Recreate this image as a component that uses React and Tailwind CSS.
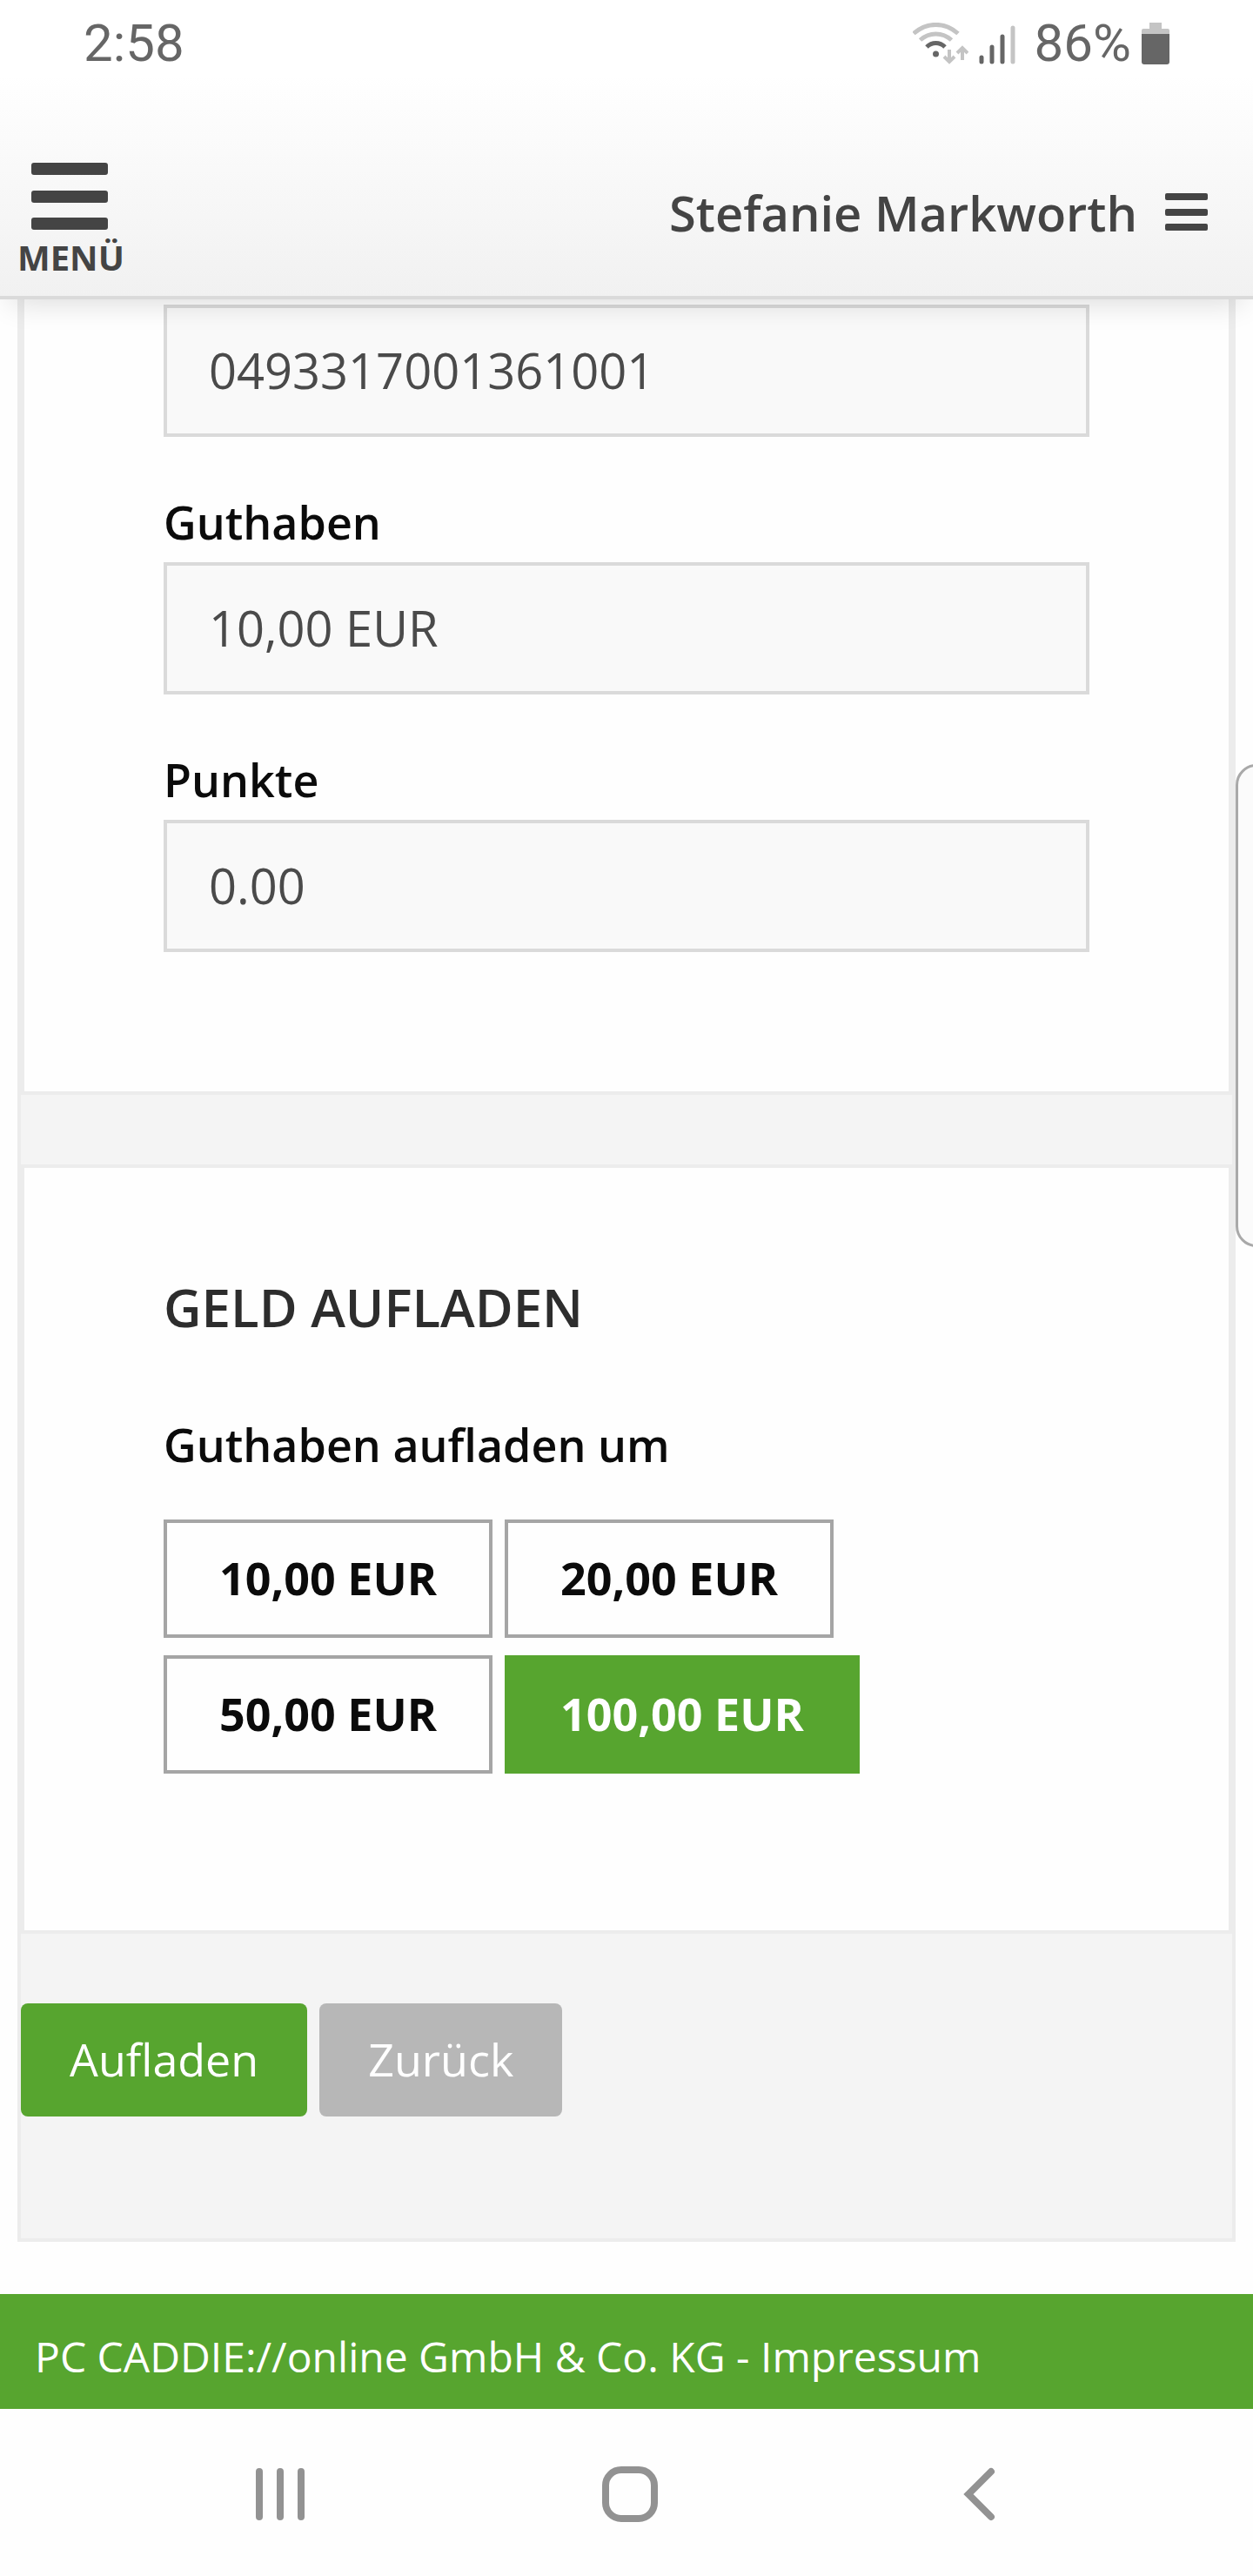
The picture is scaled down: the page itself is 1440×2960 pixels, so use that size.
import { useState } from "react";

const fields = [
  { id: "karte", label: "", value: "0493317001361001" },
  { id: "guthaben", label: "Guthaben", value: "10,00 EUR" },
  { id: "punkte", label: "Punkte", value: "0.00" },
];

const amounts = ["10,00 EUR", "20,00 EUR", "50,00 EUR", "100,00 EUR"];

function StatusBar() {
  return (
    <div className="flex items-center justify-between pt-4 pl-24 pr-24 font-[Roboto,sans-serif] text-[60px] leading-[68px] text-[#666]">
      <span>2:58</span>
      <div className="flex items-center">
        <svg width="64" height="48" viewBox="0 0 64 48" fill="none" aria-hidden="true">
          <path d="M1 12.500C16-1 37-1 52 12.500" stroke="#c4c4c4" strokeWidth="5" />
          <path d="M8.500 20C19 10.500 34 10.500 44.500 20" stroke="#c4c4c4" strokeWidth="5" />
          <path d="M16 28C22 22 31 22 37 28" stroke="#666" strokeWidth="5" />
          <circle cx="26.500" cy="36" r="3.500" fill="#666" />
          <path d="M42 31v14M36 39l6 6 6-6M57 43V29M51 35l6-6 6 6" stroke="#c4c4c4" strokeWidth="4" />
        </svg>
        <svg className="ml-3" width="42" height="48" viewBox="0 0 42 48" fill="none" strokeWidth="5" strokeLinecap="round" aria-hidden="true">
          <path d="M3 40v5M15 28v17M27 16v29" stroke="#666" />
          <path d="M39 6v39" stroke="#c4c4c4" />
        </svg>
        <span className="ml-5.5">86%</span>
        <svg className="ml-3" width="32" height="48" viewBox="0 0 32 48" aria-hidden="true">
          <path d="M9 0h14v7h7q2 0 2 2v5H0V9q0-2 2-2h7z" fill="#c4c4c4" />
          <path d="M0 13h32v32q0 3-3 3H3q-3 0-3-3z" fill="#666" />
        </svg>
      </div>
    </div>
  );
}

function Header() {
  return (
    <header className="relative z-10 border-b-4 border-[#dadada] bg-linear-to-b from-white from-25% to-[#f1f1f1] text-[#444] shadow-[0_16px_32px_-12px_rgba(0,0,0,0.14)]">
      <StatusBar />
      <div className="flex h-64 items-start justify-between pl-5 pr-13">
        <button type="button" className="mt-[103px] flex flex-col items-start gap-1 text-[40px] leading-[54px] font-bold">
          <svg className="ml-4" width="88" height="78" viewBox="0 0 88 78" fill="currentColor" aria-hidden="true">
            <rect width="88" height="14" rx="3" />
            <rect y="32" width="88" height="14" rx="3" />
            <rect y="63" width="88" height="14" rx="3" />
          </svg>
          MENÜ
        </button>
        <button type="button" className="mt-[120px] flex items-center text-[56px] leading-[80px] font-semibold">
          Stefanie Markworth
          <svg className="ml-8" width="49" height="44" viewBox="0 0 49 44" fill="currentColor" aria-hidden="true">
            <rect width="49" height="8" rx="2" />
            <rect y="18" width="49" height="8" rx="2" />
            <rect y="35" width="49" height="8" rx="2" />
          </svg>
        </button>
      </div>
    </header>
  );
}

function Field({ id, label, value }) {
  return (
    <div>
      {label && (
        <label htmlFor={id} className="mb-3 block text-[52px] leading-[68px] font-semibold">
          {label}
        </label>
      )}
      <input
        id={id}
        aria-label={label || "Kartennummer"}
        readOnly
        value={value}
        className="block h-38 w-full border-4 border-[#dadada] bg-[#f9f9f9] px-12 pb-0.5 text-[56px] text-[#4a4a4a]"
      />
    </div>
  );
}

function NavBar() {
  return (
    <nav className="flex items-center justify-between pt-[66px] pr-[290px] pb-[62px] pl-[290px]">
      <button type="button" aria-label="Letzte Apps">
        <svg width="64" height="64" viewBox="0 0 64 64" stroke="#929292" strokeWidth="8" strokeLinecap="round">
          <path d="M8 6v52M32 6v52M56 6v52" />
        </svg>
      </button>
      <button type="button" aria-label="Startseite">
        <svg width="64" height="64" viewBox="0 0 64 64" fill="none" stroke="#929292" strokeWidth="8">
          <rect x="4" y="4" width="56" height="56" rx="18" />
        </svg>
      </button>
      <button type="button" aria-label="Zurück">
        <svg width="56" height="64" viewBox="-12 0 56 64" fill="none" stroke="#929292" strokeWidth="8" strokeLinecap="round">
          <path d="M33 6L7 32l26 26" />
        </svg>
      </button>
    </nav>
  );
}

export default function App() {
  const [amount, setAmount] = useState("100,00 EUR");

  return (
    <div className="relative overflow-hidden bg-[#fefefe] font-['Open_Sans',sans-serif] text-[#0b0b0b]">
      <Header />

      <main className="mx-5 mb-15 border-x-4 border-b-4 border-[#ececec] bg-[#f4f4f4] pb-35">
        <section className="flex flex-col gap-16 border-x-4 border-b-4 border-[#ececec] bg-[#fefefe] px-40 pt-1.5 pb-40">
          {fields.map((field) => (
            <Field key={field.id} {...field} />
          ))}
        </section>

        <section className="mt-20 border-4 border-[#ececec] bg-[#fefefe] px-40 pt-30 pb-45">
          <h2 className="text-[60px] leading-[80px] font-semibold text-[#2d2d2d]">GELD AUFLADEN</h2>
          <p className="mt-21 text-[52px] leading-[68px] font-semibold">Guthaben aufladen um</p>
          <div className="mt-13 flex flex-wrap gap-x-3.5 gap-y-5">
            {amounts.map((item) => (
              <button
                key={item}
                type="button"
                aria-pressed={item === amount}
                onClick={() => setAmount(item)}
                className={`h-34 border-4 px-15 pb-0.5 text-[52px] leading-[72px] font-bold ${
                  item === amount ? "border-[#57a52f] bg-[#57a52f] text-white" : "border-[#a5a5a5] bg-[#fefefe]"
                }`}
              >
                {item}
              </button>
            ))}
          </div>
        </section>

        <div className="mt-20 flex gap-3.5 text-[52px] leading-[72px] text-white">
          <button type="button" className="h-[130px] rounded-lg bg-[#57a52f] px-14 pb-0.5">
            Aufladen
          </button>
          <button type="button" className="h-[130px] rounded-lg bg-[#b7b7b7] px-14 pb-0.5">
            Zurück
          </button>
        </div>
      </main>

      <footer className="bg-[#57a52f] px-10 pt-9 pb-6 text-[48px] leading-[72px] text-white">
        PC CADDIE://online GmbH &amp; Co. KG - <a href="#impressum">Impressum</a>
      </footer>

      <NavBar />

      {/* edge panel handle, runs off the right side */}
      <div className="absolute top-[878px] -right-8 z-20 h-[555px] w-[52px] rounded-3xl border-3 border-[#a9a9a9] bg-[#fbfbfb]" />
    </div>
  );
}
